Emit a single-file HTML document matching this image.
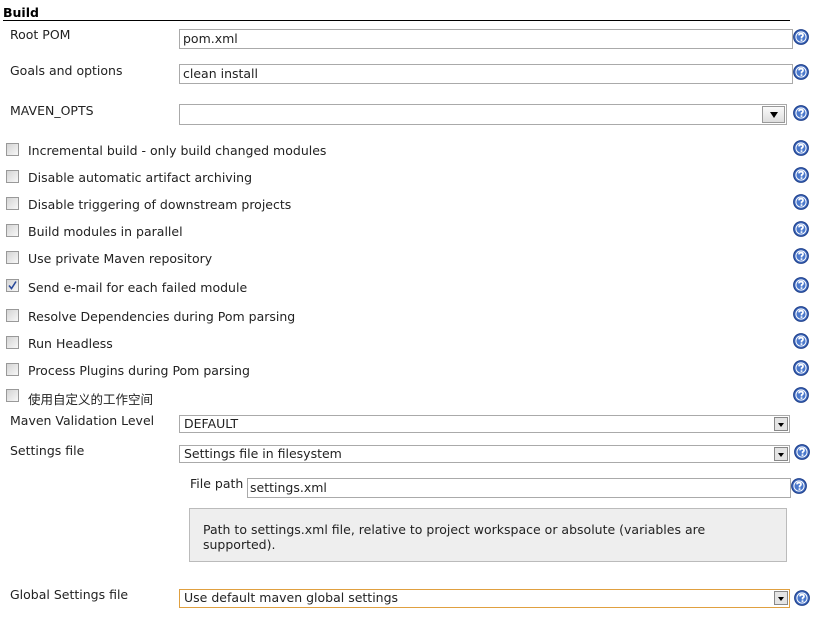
<!DOCTYPE html>
<html><head><meta charset="utf-8"><style>
body{margin:0;width:821px;height:628px;background:#fff;font-family:"DejaVu Sans",Verdana,"Noto Sans CJK SC",sans-serif;font-size:12.5px;color:#222;position:relative;overflow:hidden}
.a{position:absolute;white-space:nowrap}
.h{position:absolute;width:16px;height:16px}
.in{position:absolute;border:1px solid #aaa;box-sizing:border-box;background:#fff;padding-left:3px;line-height:18px}
.sel{position:absolute;border:1px solid #aaa;box-sizing:border-box;background:#fff;padding-left:4px;line-height:16px}
.sel .b{position:absolute;right:1px;top:1px;width:14px;height:14px;background:#e4e4e4;border:1px solid #888;box-sizing:border-box}
.sel .b:after{content:"";position:absolute;left:3px;top:5px;border-left:3px solid transparent;border-right:3px solid transparent;border-top:4px solid #000}
.cb{position:absolute;left:6px;width:13px;height:13px;border:1px solid #999;box-sizing:border-box;background:linear-gradient(135deg,#d4d4d4,#f8f8f8)}
</style></head><body>
<svg width="0" height="0" style="position:absolute"><defs><symbol id="q" viewBox="0 0 16 16"><circle cx="8" cy="8" r="7.4" fill="#3a64b8" stroke="#1e3f8a"/><circle cx="8" cy="8" r="5.6" fill="#fff"/><circle cx="8" cy="8" r="4.6" fill="#4a78cc"/><path d="M6 6.4Q6 4.6 8 4.6Q10 4.6 10 6.3Q10 7.4 8.6 8L8.5 9.4" fill="none" stroke="#fff" stroke-width="1.7"/><rect x="7.6" y="10.3" width="1.8" height="1.6" fill="#fff"/></symbol></defs></svg>
<div class="a" style="left:3px;top:5px;font-weight:bold;color:#000">Build</div>
<div style="position:absolute;left:3px;top:20px;width:787px;height:1px;background:#000"></div>

<div class="a" style="left:10px;top:27px">Root POM</div>
<div class="in" style="left:179px;top:29px;width:614px;height:20px">pom.xml</div>
<svg class="h" style="left:793px;top:29px"><use href="#q"/></svg>

<div class="a" style="left:10px;top:63px">Goals and options</div>
<div class="in" style="left:179px;top:64px;width:614px;height:20px">clean install</div>
<svg class="h" style="left:793px;top:64px"><use href="#q"/></svg>

<div class="a" style="left:10px;top:103px">MAVEN_OPTS</div>
<div class="in" style="left:179px;top:104px;width:608px;height:21px"></div>
<div style="position:absolute;left:762px;top:106px;width:23px;height:17px;border:1px solid #999;box-sizing:border-box;background:linear-gradient(#fafafa,#ddd)"><div style="position:absolute;left:7px;top:5px;border-left:4px solid transparent;border-right:4px solid transparent;border-top:6px solid #000"></div></div>
<svg class="h" style="left:793px;top:105px"><use href="#q"/></svg>

<div class="cb" style="top:143px"></div><div class="a" style="left:28px;top:143px">Incremental build - only build changed modules</div><svg class="h" style="left:793px;top:140px"><use href="#q"/></svg>
<div class="cb" style="top:170px"></div><div class="a" style="left:28px;top:170px">Disable automatic artifact archiving</div><svg class="h" style="left:793px;top:167px"><use href="#q"/></svg>
<div class="cb" style="top:197px"></div><div class="a" style="left:28px;top:197px">Disable triggering of downstream projects</div><svg class="h" style="left:793px;top:194px"><use href="#q"/></svg>
<div class="cb" style="top:224px"></div><div class="a" style="left:28px;top:224px">Build modules in parallel</div><svg class="h" style="left:793px;top:221px"><use href="#q"/></svg>
<div class="cb" style="top:251px"></div><div class="a" style="left:28px;top:251px">Use private Maven repository</div><svg class="h" style="left:793px;top:248px"><use href="#q"/></svg>
<div class="cb" style="top:279px"><svg width="11" height="11" style="position:absolute;left:0;top:0"><path d="M2 5.5L4.5 8.5L9 1.5" fill="none" stroke="#2a4a9a" stroke-width="1.6"/></svg></div><div class="a" style="left:28px;top:280px">Send e-mail for each failed module</div><svg class="h" style="left:793px;top:277px"><use href="#q"/></svg>
<div class="cb" style="top:309px"></div><div class="a" style="left:28px;top:309px">Resolve Dependencies during Pom parsing</div><svg class="h" style="left:793px;top:306px"><use href="#q"/></svg>
<div class="cb" style="top:336px"></div><div class="a" style="left:28px;top:336px">Run Headless</div><svg class="h" style="left:793px;top:333px"><use href="#q"/></svg>
<div class="cb" style="top:363px"></div><div class="a" style="left:28px;top:363px">Process Plugins during Pom parsing</div><svg class="h" style="left:793px;top:360px"><use href="#q"/></svg>
<div class="cb" style="top:389px"></div><div class="a" style="left:28px;top:389px">使用自定义的工作空间</div><svg class="h" style="left:793px;top:387px"><use href="#q"/></svg>

<div class="a" style="left:10px;top:413px">Maven Validation Level</div>
<div class="sel" style="left:179px;top:415px;width:611px;height:18px">DEFAULT<div class="b"></div></div>

<div class="a" style="left:10px;top:443px">Settings file</div>
<div class="sel" style="left:179px;top:445px;width:611px;height:18px">Settings file in filesystem<div class="b"></div></div>
<svg class="h" style="left:794px;top:444px"><use href="#q"/></svg>

<div class="a" style="left:190px;top:476px">File path</div>
<div class="in" style="left:247px;top:478px;width:544px;height:20px;padding-left:2px">settings.xml</div>
<svg class="h" style="left:791px;top:478px"><use href="#q"/></svg>

<div style="position:absolute;left:189px;top:508px;width:598px;height:54px;box-sizing:border-box;border:1px solid #bbb;background:#eee;padding:13px 60px 0 13px;line-height:15px">Path to settings.xml file, relative to project workspace or absolute (variables are supported).</div>

<div class="a" style="left:10px;top:587px">Global Settings file</div>
<div class="sel" style="left:179px;top:589px;width:611px;height:19px;border-color:#e0a040">Use default maven global settings<div class="b"></div></div>
<svg class="h" style="left:794px;top:590px"><use href="#q"/></svg>
</body></html>
